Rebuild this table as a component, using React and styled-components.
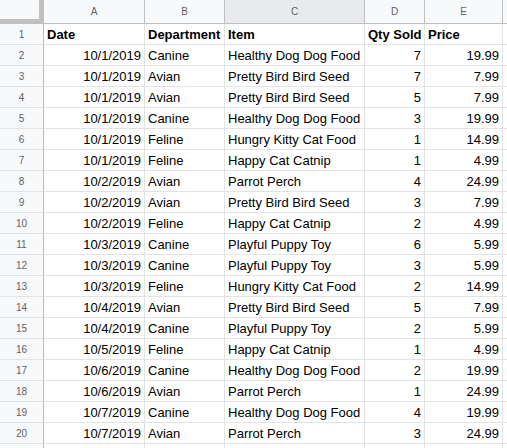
import React from "react";
import styled, { createGlobalStyle } from "styled-components";

const GlobalStyle = createGlobalStyle`
  html, body {
    margin: 0;
    padding: 0;
    background: #fff;
    overflow: hidden;
  }
  body {
    font-family: "Liberation Sans", Arial, sans-serif;
  }
`;

const Sheet = styled.div`
  display: grid;
  grid-template-columns: 44px 101px 80px 140px 60px 78px 1fr;
  grid-template-rows: 24px;
  grid-auto-rows: 21px;
  width: 507px;
  height: 448px;
  overflow: hidden;
`;

const Corner = styled.div`
  position: relative;
  box-sizing: border-box;
  background: #f8f9fa;
  border-right: 1px solid #c0c0c0;
  border-bottom: 1px solid #c0c0c0;

  &::before {
    content: "";
    position: absolute;
    right: 0;
    top: 0;
    width: 4px;
    height: 100%;
    background: #c0c0c0;
  }
  &::after {
    content: "";
    position: absolute;
    left: 0;
    bottom: 0;
    width: 100%;
    height: 4px;
    background: #c0c0c0;
  }
`;

const ColHead = styled.div`
  box-sizing: border-box;
  background: ${({ $active }) => ($active ? "#e8eaed" : "#f8f9fa")};
  border-right: 1px solid #c0c0c0;
  border-bottom: 1px solid #c0c0c0;
  color: #5f6368;
  font-size: 10px;
  display: flex;
  align-items: center;
  justify-content: center;
`;

const RowHead = styled.div`
  box-sizing: border-box;
  background: #f8f9fa;
  border-right: 1px solid #c0c0c0;
  border-bottom: 1px solid #e2e3e3;
  color: #5f6368;
  font-size: 10px;
  display: flex;
  align-items: center;
  justify-content: center;
`;

const Cell = styled.div`
  box-sizing: border-box;
  border-right: 1px solid #e2e3e3;
  border-bottom: 1px solid #e2e3e3;
  padding: 1px 3px 0;
  font-size: 13px;
  line-height: 20px;
  color: #000;
  white-space: nowrap;
  overflow: hidden;
  text-align: ${({ $num }) => ($num ? "right" : "left")};
  font-weight: ${({ $bold }) => ($bold ? 700 : 400)};
`;

const header = ["Date", "Department", "Item", "Qty Sold", "Price"];

const rows = [
  ["10/1/2019", "Canine", "Healthy Dog Dog Food", "7", "19.99"],
  ["10/1/2019", "Avian", "Pretty Bird Bird Seed", "7", "7.99"],
  ["10/1/2019", "Avian", "Pretty Bird Bird Seed", "5", "7.99"],
  ["10/1/2019", "Canine", "Healthy Dog Dog Food", "3", "19.99"],
  ["10/1/2019", "Feline", "Hungry Kitty Cat Food", "1", "14.99"],
  ["10/1/2019", "Feline", "Happy Cat Catnip", "1", "4.99"],
  ["10/2/2019", "Avian", "Parrot Perch", "4", "24.99"],
  ["10/2/2019", "Avian", "Pretty Bird Bird Seed", "3", "7.99"],
  ["10/2/2019", "Feline", "Happy Cat Catnip", "2", "4.99"],
  ["10/3/2019", "Canine", "Playful Puppy Toy", "6", "5.99"],
  ["10/3/2019", "Canine", "Playful Puppy Toy", "3", "5.99"],
  ["10/3/2019", "Feline", "Hungry Kitty Cat Food", "2", "14.99"],
  ["10/4/2019", "Avian", "Pretty Bird Bird Seed", "5", "7.99"],
  ["10/4/2019", "Canine", "Playful Puppy Toy", "2", "5.99"],
  ["10/5/2019", "Feline", "Happy Cat Catnip", "1", "4.99"],
  ["10/6/2019", "Canine", "Healthy Dog Dog Food", "2", "19.99"],
  ["10/6/2019", "Avian", "Parrot Perch", "1", "24.99"],
  ["10/7/2019", "Canine", "Healthy Dog Dog Food", "4", "19.99"],
  ["10/7/2019", "Avian", "Parrot Perch", "3", "24.99"],
];

// columns A, D, E hold numbers
const numCols = [true, false, false, true, true];

export default function App() {
  return (
    <>
      <GlobalStyle />
      <Sheet>
        <Corner />
        {["A", "B", "C", "D", "E", ""].map((l, i) => (
          <ColHead key={i} $active={l === "C"}>
            {l}
          </ColHead>
        ))}

        <RowHead>1</RowHead>
        {header.map((h, i) => (
          <Cell key={i} $bold>
            {h}
          </Cell>
        ))}
        <Cell />

        {rows.map((r, ri) => (
          <React.Fragment key={ri}>
            <RowHead>{ri + 2}</RowHead>
            {r.map((v, ci) => (
              <Cell key={ci} $num={numCols[ci]}>
                {v}
              </Cell>
            ))}
            <Cell />
          </React.Fragment>
        ))}

        {/* row 21 only peeks in at the bottom edge */}
        <RowHead />
        {[0, 1, 2, 3, 4, 5].map((i) => (
          <Cell key={i} />
        ))}
      </Sheet>
    </>
  );
}
